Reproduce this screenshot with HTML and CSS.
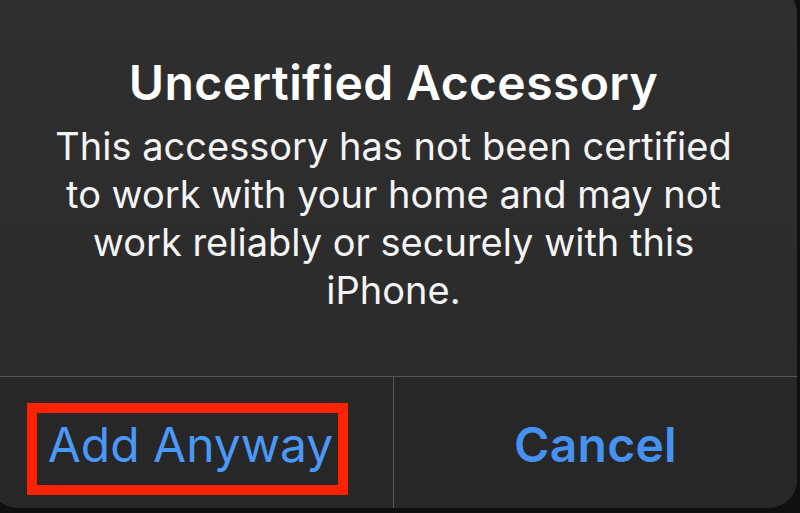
FILE: index.html
```html
<!DOCTYPE html>
<html lang="en">
<head>
<meta charset="utf-8">
<title>Uncertified Accessory</title>
<link rel="stylesheet" href="styles.css">
</head>
<body>
<div class="alert">
  <div class="alert-content">
    <h1 class="alert-title">Uncertified Accessory</h1>
    <p class="alert-message">This accessory has not been certified to work with your home and may not work reliably or securely with this iPhone.</p>
  </div>
  <div class="alert-actions">
    <div class="action action-highlighted">
      <span class="highlight"><span class="action-label">Add Anyway</span></span>
    </div>
    <div class="action action-default">
      <span class="action-label">Cancel</span>
    </div>
  </div>
</div>
</body>
</html>
```
FILE: styles.css
```css
html, body {
  margin: 0;
  padding: 0;
  background: #0f0f0f;
  width: 800px;
  height: 513px;
  overflow: hidden;
}

body {
  font-family: Inter, "Noto Sans", sans-serif;
  -webkit-font-smoothing: antialiased;
}

.alert {
  margin-top: -14px;
  margin-left: -10px;
  width: 807px;
  height: 522px;
  border-radius: 28px;
  overflow: hidden;
  display: flex;
  flex-direction: column;
  background: #282828;
}

.alert-content {
  height: 391px;
  flex: none;
  box-sizing: border-box;
  padding-top: 68px;
  background: linear-gradient(#2f2f2f, #2b2b2b);
  border-bottom: 1px solid #565656;
  text-align: center;
  color: #ffffff;
}

.alert-title {
  margin: 0;
  font-size: 48px;
  line-height: 58px;
  font-weight: 600;
  letter-spacing: 0.4px;
}

.alert-message {
  margin: 10px auto 0;
  width: 720px;
  font-size: 38px;
  line-height: 48px;
  font-weight: 400;
  color: #f4f4f4;
}

.alert-actions {
  flex: 1;
  display: flex;
  background: #272727;
}

.action {
  flex: 1;
  display: flex;
  align-items: center;
  justify-content: center;
}

.action + .action {
  border-left: 1px solid #565656;
}

.action-label {
  font-size: 48px;
  line-height: 58px;
  color: #4a98f7;
  font-weight: 400;
}

.action-default {
  padding-top: 5px;
}

.action-default .action-label {
  font-weight: 600;
  letter-spacing: 0.3px;
  color: #4592f2;
}

.highlight {
  box-sizing: border-box;
  width: 321px;
  height: 92px;
  border: 10px solid #ff2200;
  display: flex;
  align-items: center;
  justify-content: center;
  padding: 0 0 8px 6px;
  margin: 13px 8px 0 0;
}
```
